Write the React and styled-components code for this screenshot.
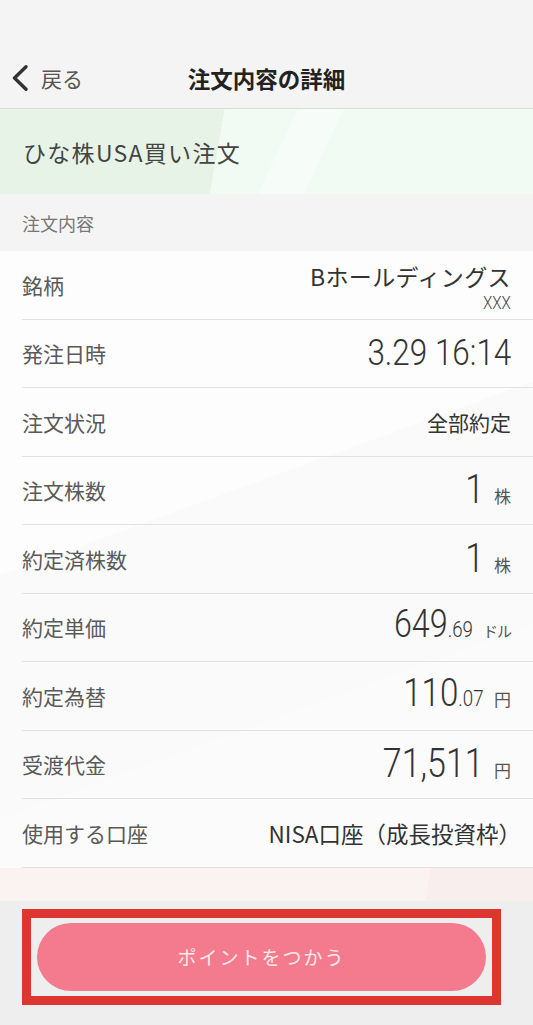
import React from 'react';
import styled, { createGlobalStyle } from 'styled-components';

const GlobalStyle = createGlobalStyle`
  html, body {
    margin: 0;
    padding: 0;
    background: #eeeeee;
  }
  body {
    font-family: "Noto Sans CJK JP", "Noto Sans", sans-serif;
    color: #333;
  }
`;

const rows = [
  { label: '銘柄', kind: 'name', value: 'Bホールディングス', sub: 'XXX' },
  { label: '発注日時', kind: 'num', value: '3.29 16:14', size: 37 },
  { label: '注文状況', kind: 'text', value: '全部約定' },
  { label: '注文株数', kind: 'num', value: '1', unit: '株', size: 40 },
  { label: '約定済株数', kind: 'num', value: '1', unit: '株', size: 40 },
  { label: '約定単価', kind: 'num', value: '649', decimal: '.69', unit: 'ドル', size: 38 },
  { label: '約定為替', kind: 'num', value: '110', decimal: '.07', unit: '円', size: 39 },
  { label: '受渡代金', kind: 'num', value: '71,511', unit: '円', size: 40 },
  { label: '使用する口座', kind: 'text', value: 'NISA口座（成長投資枠）', wide: true },
];

function App() {
  return (
    <Page>
      <GlobalStyle />
      <Header>
        <BackButton>
          <svg width="18" height="26" viewBox="0 0 18 26">
            <path d="M15 1.8 L3.5 13 L15 24.2" fill="none" stroke="#333" strokeWidth="3.4" strokeLinecap="round" strokeLinejoin="round" />
          </svg>
          <span>戻る</span>
        </BackButton>
        <Title>注文内容の詳細</Title>
        <div />
      </Header>

      <Banner>ひな株USA買い注文</Banner>

      <SectionLabel>注文内容</SectionLabel>

      <List>
        {rows.map((r) => (
          <Row key={r.label}>
            <Label>{r.label}</Label>
            {r.kind === 'name' && (
              <NameBlock>
                <NameText>{r.value}</NameText>
                <SubText>{r.sub}</SubText>
              </NameBlock>
            )}
            {r.kind === 'text' && <ValueText $wide={r.wide}>{r.value}</ValueText>}
            {r.kind === 'num' && (
              <NumBlock>
                <Num $size={r.size}>
                  {r.value}
                  {r.decimal && <Decimal>{r.decimal}</Decimal>}
                </Num>
                {r.unit && <Unit $small={r.unit === 'ドル'}>{r.unit}</Unit>}
              </NumBlock>
            )}
          </Row>
        ))}
      </List>
      <Spacer />

      <Footer>
        <Highlight>
          <PointButton>ポイントをつかう</PointButton>
        </Highlight>
      </Footer>
    </Page>
  );
}

const Page = styled.div`
  width: 533px;
  min-height: 1025px;
  display: flex;
  flex-direction: column;
  background: #eeeeee;
`;

const Header = styled.header`
  height: 109px;
  box-sizing: border-box;
  padding-top: 58px;
  background: #f4f4f4;
  border-bottom: 1px solid #dcdcdc;
  display: grid;
  grid-template-columns: 1fr auto 1fr;
  align-items: start;
`;

const BackButton = styled.div`
  display: flex;
  align-items: center;
  gap: 12px;
  padding-left: 11px;
  height: 40px;
  span {
    font-size: 21px;
    color: #555;
  }
`;

const Title = styled.h1`
  margin: 0;
  height: 40px;
  line-height: 40px;
  font-size: 22.5px;
  font-weight: 700;
  color: #222;
`;

const Banner = styled.div`
  height: 85px;
  box-sizing: border-box;
  padding-left: 23px;
  display: flex;
  align-items: center;
  font-size: 23px;
  letter-spacing: 1.3px;
  color: #444;
  background:
    linear-gradient(115deg, transparent 0 52%, rgba(255,255,255,0.35) 52% 60%, transparent 60%),
    linear-gradient(100deg, #e8f3e8 0 41%, #f1fbf3 41% 100%);
`;

const SectionLabel = styled.div`
  height: 57px;
  box-sizing: border-box;
  padding-left: 22px;
  display: flex;
  align-items: center;
  font-size: 18px;
  color: #777;
  background: #f4f4f4;
`;

const List = styled.div`
  background:
    linear-gradient(160deg, #fdfdfd 0 40%, #fafafa 40% 70%, #fcfbfb 70%);
  padding-left: 22px;
`;

const Row = styled.div`
  height: 67.5px;
  border-bottom: 1px solid #e2e2e2;
  display: flex;
  align-items: center;
  justify-content: space-between;
  padding-right: 22px;
`;

const Label = styled.div`
  font-size: 21px;
  color: #595959;
`;

const NameBlock = styled.div`
  display: flex;
  flex-direction: column;
  align-items: flex-end;
  margin-top: 6px;
`;

const NameText = styled.div`
  font-size: 23px;
  line-height: 28px;
  letter-spacing: 0.4px;
  color: #333;
`;

const SubText = styled.div`
  font-family: "Roboto", sans-serif;
  font-weight: 300;
  font-size: 19px;
  line-height: 22px;
  margin-top: 2px;
  color: #444;
  transform: scaleX(0.8);
  transform-origin: right;
`;

const ValueText = styled.div`
  font-size: ${(p) => (p.$wide ? '22.5px' : '21px')};
  color: #333;
  margin-right: ${(p) => (p.$wide ? '-10px' : '0')};
`;

const NumBlock = styled.div`
  display: flex;
  align-items: baseline;
  gap: 10px;
`;

const Num = styled.span`
  display: inline-block;
  font-family: "Roboto", sans-serif;
  font-weight: 300;
  font-size: ${(p) => p.$size}px;
  line-height: 44px;
  color: #333;
  transform: scaleX(0.85);
  transform-origin: right;
`;

const Decimal = styled.span`
  font-size: 22px;
`;

const Unit = styled.span`
  font-size: ${(p) => (p.$small ? '15px' : '17px')};
  letter-spacing: ${(p) => (p.$small ? '-1px' : '0')};
  color: #555;
`;

const Spacer = styled.div`
  height: 33px;
  background: linear-gradient(100deg, #fbf3f2 0 80%, #f8eeed 80%);
`;

const Footer = styled.footer`
  flex: 1;
  background: #eeeeee;
  padding: 8px 32px 0 22px;
`;

const Highlight = styled.div`
  width: 479px;
  height: 96px;
  box-sizing: border-box;
  border: 9px solid #dd3631;
  padding: 5px 6px;
`;

const PointButton = styled.button`
  width: 100%;
  height: 68px;
  border: none;
  border-radius: 34px;
  background: #f37b8d;
  color: #fde9ec;
  font-family: "Noto Sans CJK JP", "Noto Sans", sans-serif;
  font-size: 19px;
  letter-spacing: 2px;
  padding: 0;
`;

export default App;
